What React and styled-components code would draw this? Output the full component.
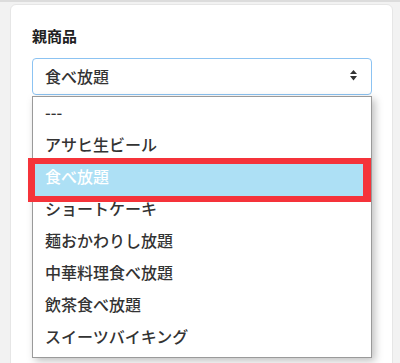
import React from "react";
import styled, { createGlobalStyle } from "styled-components";

const options = [
  "---",
  "アサヒ生ビール",
  "食べ放題",
  "ショートケーキ",
  "麺おかわりし放題",
  "中華料理食べ放題",
  "飲茶食べ放題",
  "スイーツバイキング",
];

const selected = "食べ放題";

export default function App() {
  return (
    <>
      <GlobalStyle />
      <Page>
        <Card>
          <Label>親商品</Label>
          <SelectBox>
            <span>{selected}</span>
            <svg width="7" height="11" viewBox="0 0 7 11">
              <path d="M3.5 0 L7 4 L0 4 Z M0 6 L7 6 L3.5 10.5 Z" fill="#333" />
            </svg>
          </SelectBox>
          <Dropdown>
            {options.map((opt) => (
              <Option key={opt} $active={opt === selected}>
                <span>{opt}</span>
              </Option>
            ))}
          </Dropdown>
        </Card>
      </Page>
    </>
  );
}

const GlobalStyle = createGlobalStyle`
  html, body {
    margin: 0;
    padding: 0;
    background: #f2f2f2;
    font-family: "Noto Sans CJK JP", "Noto Sans", sans-serif;
  }
`;

const Page = styled.div`
  height: 363px;
  overflow: hidden;
  border-top: 2px solid #dcdcdc;
  padding: 2px 7px 0 10px;
  box-sizing: border-box;
`;

const Card = styled.div`
  background: #fff;
  border: 1px solid #e6e6e6;
  border-radius: 6px;
  height: 400px;
  padding: 19px 20px 0 21px;
  box-sizing: border-box;
`;

const Label = styled.div`
  font-size: 15px;
  font-weight: 700;
  color: #222;
  line-height: 24px;
  margin-bottom: 10px;
`;

const SelectBox = styled.div`
  height: 37px;
  box-sizing: border-box;
  border: 1px solid #8cc3f2;
  border-radius: 4px;
  display: flex;
  align-items: center;
  justify-content: space-between;
  padding: 0 14px 2px 12px;
  font-size: 16px;
  color: #333;
  font-weight: 500;
`;

const Dropdown = styled.div`
  margin-top: 1px;
  border: 1px solid #9a9a9a;
  background: #fff;
  box-shadow: 3px 3px 8px rgba(0, 0, 0, 0.25);
  padding: 0 0 4px;
  position: relative;
  isolation: isolate;
`;

const Option = styled.div`
  position: relative;
  height: 32px;
  box-sizing: border-box;
  display: flex;
  align-items: center;
  padding: 0 0 3px 12px;
  font-size: 16px;
  font-weight: 500;
  color: ${(p) => (p.$active ? "#fff" : "#333")};

  span {
    position: relative;
    z-index: 2;
  }

  ${(p) =>
    p.$active &&
    `
    &::before {
      content: "";
      position: absolute;
      top: 3px;
      bottom: -3px;
      left: 2px;
      right: 8px;
      background: #ade0f5;
      z-index: 0;
    }
    &::after {
      content: "";
      position: absolute;
      top: -3px;
      bottom: -9px;
      left: -5px;
      right: 0;
      border: 6px solid #f5333a;
      border-left-width: 7px;
      border-right-width: 8px;
      z-index: 1;
    }
  `}
`;
